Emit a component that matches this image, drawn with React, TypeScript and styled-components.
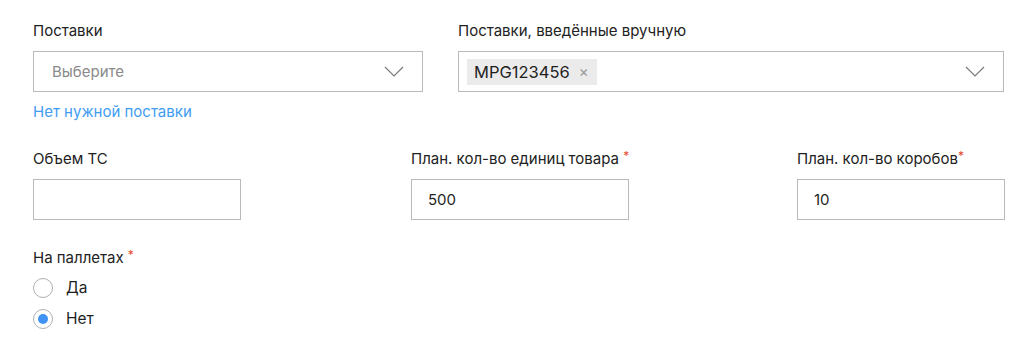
import { FC } from "react";
import styled, { createGlobalStyle } from "styled-components";

const GlobalStyle = createGlobalStyle`
  body {
    margin: 0;
    background: #ffffff;
    font-family: Inter, "Noto Sans", sans-serif;
    color: #1f1f1f;
  }
`;

const Page = styled.div`
  width: 1024px;
  padding: 22px 20px 0 33px;
  box-sizing: border-box;
`;

const TopRow = styled.div`
  display: grid;
  grid-template-columns: 390px 546px;
  column-gap: 35px;
`;

const MiddleRow = styled.div`
  display: grid;
  grid-template-columns: 378px 386px 208px;
  margin-top: 29px;
`;

const Field = styled.div`
  display: flex;
  flex-direction: column;
  align-items: flex-start;
`;

const Label = styled.label`
  font-size: 15px;
  line-height: 18px;
  color: #222;
  margin-bottom: 11px;
  white-space: nowrap;
`;

const Required = styled.span`
  color: #e5472d;
  font-size: 12px;
  vertical-align: top;
  position: relative;
  top: -3px;
`;

const Select = styled.div`
  width: 100%;
  height: 41px;
  box-sizing: border-box;
  border: 1px solid #b9b9b9;
  display: flex;
  align-items: center;
  padding: 0 18px 0 8px;
  gap: 8px;
`;

const Placeholder = styled.span`
  flex: 1;
  font-size: 15px;
  color: #8a8a8a;
  padding-left: 10px;
`;

const Chip = styled.span`
  display: inline-flex;
  align-items: center;
  gap: 9px;
  height: 26px;
  padding: 0 8px 0 7px;
  background: #ebebeb;
  font-size: 16.5px;
  color: #1f1f1f;
`;

const ChipClose = styled.span`
  font-size: 15px;
  color: #9a9a9a;
  line-height: 1;
`;

const Spacer = styled.span`
  flex: 1;
`;

const Input = styled.input<{ $w: number }>`
  width: ${(p) => p.$w}px;
  height: 41px;
  box-sizing: border-box;
  border: 1px solid #b9b9b9;
  padding: 0 16px;
  font-family: Inter, "Noto Sans", sans-serif;
  font-size: 15px;
  color: #1f1f1f;
  outline: none;
  border-radius: 0;
`;

const Link = styled.a`
  margin-top: 11px;
  font-size: 15px;
  line-height: 18px;
  color: #3f9cf2;
  text-decoration: none;
`;

const RadioGroup = styled.div`
  margin-top: 29px;
  display: flex;
  flex-direction: column;
  gap: 11px;
`;

const GroupTitle = styled.div`
  font-size: 15px;
  line-height: 18px;
  color: #222;
`;

const RadioRow = styled.label`
  display: flex;
  align-items: center;
  gap: 13px;
  font-size: 15.5px;
  line-height: 20px;
  color: #1f1f1f;
`;

const RadioCircle = styled.span<{ $checked?: boolean }>`
  width: 20px;
  height: 20px;
  box-sizing: border-box;
  border-radius: 50%;
  border: 1px solid #b0b0b0;
  display: flex;
  align-items: center;
  justify-content: center;
  &::after {
    content: "";
    width: 10px;
    height: 10px;
    border-radius: 50%;
    background: ${(p) => (p.$checked ? "#3f93f5" : "transparent")};
  }
`;

const Chevron: FC = () => (
  <svg width="20" height="11" viewBox="0 0 20 11" fill="none">
    <path d="M1 1L10 10L19 1" stroke="#7a7a7a" strokeWidth="1.2" />
  </svg>
);

const App: FC = () => {
  return (
    <Page>
      <GlobalStyle />
      <TopRow>
        <Field>
          <Label>Поставки</Label>
          <Select>
            <Placeholder>Выберите</Placeholder>
            <Chevron />
          </Select>
          <Link href="#">Нет нужной поставки</Link>
        </Field>
        <Field>
          <Label>Поставки, введённые вручную</Label>
          <Select>
            <Chip>
              MPG123456
              <ChipClose>×</ChipClose>
            </Chip>
            <Spacer />
            <Chevron />
          </Select>
        </Field>
      </TopRow>

      <MiddleRow>
        <Field>
          <Label>Объем ТС</Label>
          <Input $w={208} defaultValue="" />
        </Field>
        <Field>
          <Label>
            План. кол-во единиц товара <Required>*</Required>
          </Label>
          <Input $w={218} defaultValue="500" />
        </Field>
        <Field>
          <Label>
            План. кол-во коробов<Required>*</Required>
          </Label>
          <Input $w={208} defaultValue="10" />
        </Field>
      </MiddleRow>

      <RadioGroup>
        <GroupTitle>
          На паллетах <Required>*</Required>
        </GroupTitle>
        <RadioRow>
          <RadioCircle />
          Да
        </RadioRow>
        <RadioRow>
          <RadioCircle $checked />
          Нет
        </RadioRow>
      </RadioGroup>
    </Page>
  );
};

export default App;
